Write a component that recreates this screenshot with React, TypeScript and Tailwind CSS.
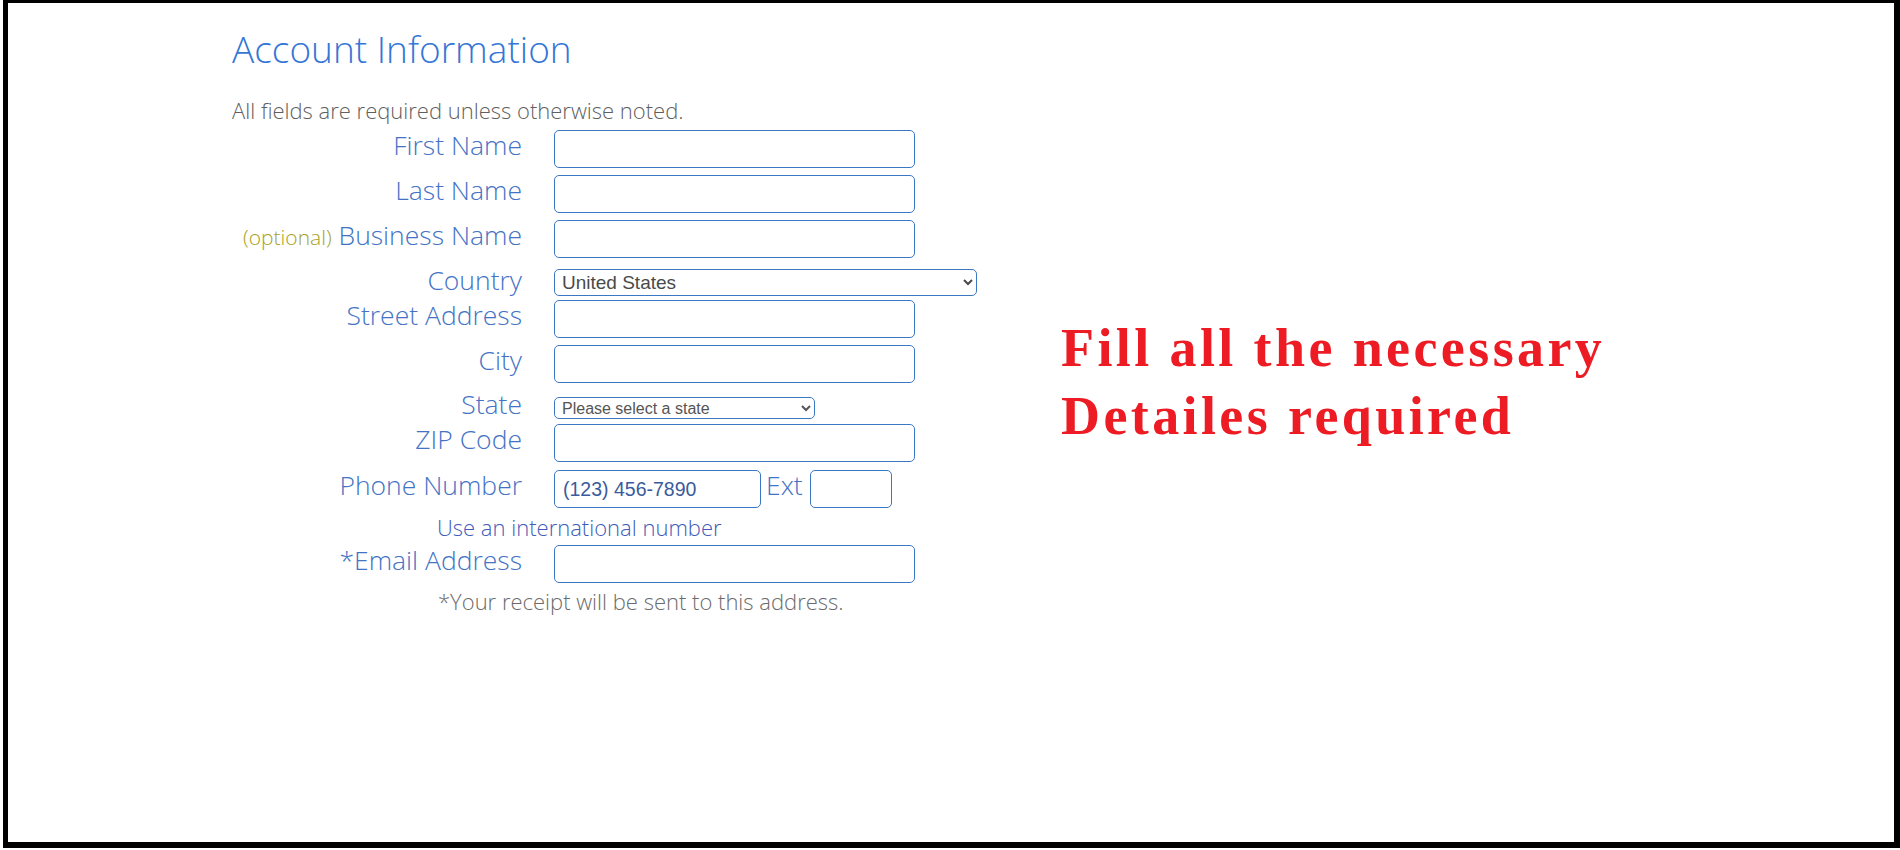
import React from "react";

const labelCls =
  "w-[290px] shrink-0 text-right text-[26.5px] leading-[30px] font-light text-[#4473c5]";
const inputCls =
  "h-[38px] border border-[#3b78c3] rounded-[5px] bg-white outline-none";
const noteCls = "text-[22px] leading-[30px] font-light";

const Field: React.FC<{ label: React.ReactNode; mt: string; h?: string }> = ({
  label,
  mt,
  h = "h-[38px]",
}) => (
  <div className={`flex items-start gap-[32px] ${mt}`}>
    <label className={labelCls}>{label}</label>
    <input className={`w-[361px] ${inputCls} ${h}`} />
  </div>
);

const App: React.FC = () => {
  return (
    <div className="w-[1900px] h-[850px] bg-white font-['Open_Sans',sans-serif]">
      <div className="ml-[3px] w-[1897px] h-[848px] border-black border-l-[5px] border-t-[3px] border-r-[6px] border-b-[6px] pl-[224px] bg-white">
        <div className="flex items-start mt-[24px]">
          {/* Form */}
          <div className="w-[829px] shrink-0">
            <h1 className="text-[37px] leading-[44px] font-light text-[#3476d6]">
              Account Information
            </h1>
            <p className={`${noteCls} mt-[24px] text-[#5f5f5f]`}>
              All fields are required unless otherwise noted.
            </p>

            <Field label="First Name" mt="mt-[5px]" />
            <Field label="Last Name" mt="mt-[7px]" />
            <Field
              label={
                <>
                  <span className="text-[21px] text-[#a6a226]">(optional)</span>{" "}
                  Business Name
                </>
              }
              mt="mt-[7px]"
            />

            <div className="flex items-start gap-[32px] mt-[7px]">
              <label className={labelCls}>Country</label>
              <select
                defaultValue="US"
                className="mt-[4px] w-[423px] h-[27px] border border-[#3b78c3] rounded-[5px] bg-white pl-[3px] text-[19px] text-[#4a4a4a] font-['Liberation_Sans',Arial,sans-serif]"
              >
                <option value="US">United States</option>
                <option value="CA">Canada</option>
              </select>
            </div>

            <Field label="Street Address" mt="mt-[4px]" />
            <Field label="City" mt="mt-[7px]" />

            <div className="flex items-start gap-[32px] mt-[6px]">
              <label className={labelCls}>State</label>
              <select
                defaultValue=""
                className="mt-[8px] w-[261px] h-[22px] border border-[#3b78c3] rounded-[5px] bg-white pl-[3px] text-[16px] text-[#555] font-['Liberation_Sans',Arial,sans-serif]"
              >
                <option value="">Please select a state</option>
              </select>
            </div>

            <Field label="ZIP Code" mt="mt-[5px]" />

            <div className="flex items-start gap-[32px] mt-[8px]">
              <label className={labelCls}>Phone Number</label>
              <div className="flex items-start">
                <input
                  defaultValue="(123) 456-7890"
                  className={`w-[207px] ${inputCls} h-[37px] pl-[8px] text-[19.5px] text-[#3b5b9c] font-['Liberation_Sans',Arial,sans-serif]`}
                />
                <span className="ml-[5px] text-[26.5px] leading-[30px] font-light text-[#4473c5]">
                  Ext
                </span>
                <input className={`ml-[7px] w-[82px] ${inputCls} h-[37px]`} />
              </div>
            </div>

            <p className={`${noteCls} ml-[205px] mt-[4px] text-[#3f5cb8]`}>
              Use an international number
            </p>

            <Field label="*Email Address" mt="mt-[3px]" h="h-[37px]" />

            <p className={`${noteCls} ml-[206px] mt-[3px] text-[#6b6b6b]`}>
              *Your receipt will be sent to this address.
            </p>
          </div>

          {/* Note */}
          <div className="mt-[287px] whitespace-nowrap font-['Liberation_Serif','Times_New_Roman',serif] font-bold text-[54px] leading-[68px] tracking-[3.4px] text-[#ed1c24]">
            Fill all the necessary
            <br />
            Detailes required
          </div>
        </div>
      </div>
    </div>
  );
};

export default App;
